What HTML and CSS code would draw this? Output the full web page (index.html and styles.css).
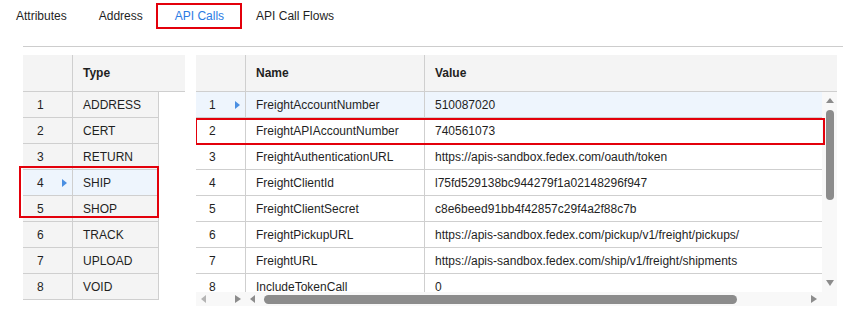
FILE: index.html
```html
<!DOCTYPE html>
<html lang="en">
<head>
    <meta charset="UTF-8">
    <meta name="viewport" content="width=device-width, initial-scale=1.0">
    <title>API Calls</title>
    <link rel="stylesheet" href="styles.css">
</head>
<body>
    <div class="tabs">
        <div class="tab">Attributes</div>
        <div class="tab">Address</div>
        <div class="tab active mark-tab">API Calls</div>
        <div class="tab">API Call Flows</div>
    </div>

    <div class="panel">
        <!-- call types -->
        <div class="type-grid">
            <div class="head">
                <div class="num"></div>
                <div class="col-type">Type</div>
            </div>
            <div class="row"><div class="num">1</div><div class="col-type">ADDRESS</div></div>
            <div class="row"><div class="num">2</div><div class="col-type">CERT</div></div>
            <div class="row"><div class="num">3</div><div class="col-type">RETURN</div></div>
            <div class="mark-group">
                <div class="row current"><div class="num">4<span class="pointer"></span></div><div class="col-type">SHIP</div></div>
                <div class="row"><div class="num">5</div><div class="col-type">SHOP</div></div>
            </div>
            <div class="row"><div class="num">6</div><div class="col-type">TRACK</div></div>
            <div class="row"><div class="num">7</div><div class="col-type">UPLOAD</div></div>
            <div class="row"><div class="num">8</div><div class="col-type">VOID</div></div>
        </div>

        <!-- settings of the selected call -->
        <div class="call-grid">
            <div class="head">
                <div class="num"></div>
                <div class="col-name">Name</div>
                <div class="col-value">Value</div>
            </div>
            <div class="body">
                <div class="rows">
                    <div class="row current"><div class="num">1<span class="pointer"></span></div><div class="col-name">FreightAccountNumber</div><div class="col-value">510087020</div></div>
                    <div class="row mark-row"><div class="num">2</div><div class="col-name">FreightAPIAccountNumber</div><div class="col-value">740561073</div></div>
                    <div class="row"><div class="num">3</div><div class="col-name">FreightAuthenticationURL</div><div class="col-value">https://apis-sandbox.fedex.com/oauth/token</div></div>
                    <div class="row"><div class="num">4</div><div class="col-name">FreightClientId</div><div class="col-value">l75fd529138bc944279f1a02148296f947</div></div>
                    <div class="row"><div class="num">5</div><div class="col-name">FreightClientSecret</div><div class="col-value">c8e6beed91bb4f42857c29f4a2f88c7b</div></div>
                    <div class="row"><div class="num">6</div><div class="col-name">FreightPickupURL</div><div class="col-value">https://apis-sandbox.fedex.com/pickup/v1/freight/pickups/</div></div>
                    <div class="row"><div class="num">7</div><div class="col-name">FreightURL</div><div class="col-value">https://apis-sandbox.fedex.com/ship/v1/freight/shipments</div></div>
                    <div class="row"><div class="num">8</div><div class="col-name">IncludeTokenCall</div><div class="col-value">0</div></div>
                </div>
                <div class="vscroll">
                    <span class="arrow up"></span>
                    <span class="vthumb"></span>
                    <span class="arrow down"></span>
                </div>
            </div>
            <div class="hscroll">
                <div class="frozen">
                    <span class="arrow left off"></span>
                    <span class="arrow right"></span>
                </div>
                <div class="track">
                    <span class="arrow left"></span>
                    <span class="hthumb"></span>
                    <span class="arrow right"></span>
                </div>
                <div class="corner"></div>
            </div>
        </div>
    </div>
</body>
</html>
```

FILE: styles.css
```css
body {
    margin: 0;
    font-family: "Liberation Sans", Arial, sans-serif;
    font-size: 12px;
    color: #1f1f1f;
    background: #fff;
}

/* tab strip */
.tabs {
    display: flex;
    padding-top: 3px;
}
.tab {
    position: relative;
    height: 26px;
    line-height: 26px;
    padding: 0 16px;
    white-space: nowrap;
}
.tab.active {
    color: #2a7be4;
}

/* red review marks drawn over the page */
.mark-tab::after,
.mark-row::after,
.mark-group::after {
    content: "";
    position: absolute;
    border: 2px solid #e3000b;
    pointer-events: none;
}
.mark-tab::after {
    top: 0;
    bottom: 0;
    left: -3px;
    right: -2px;
}
.mark-group {
    position: relative;
    width: 136px;
}
.mark-group::after {
    top: -4px;
    bottom: 4px;
    left: -4px;
    right: 0;
}
.mark-row {
    position: relative;
    z-index: 1;
}
.mark-row::after {
    top: 0;
    bottom: -2px;
    left: -1px;
    right: -3px;
}

.panel {
    display: flex;
    gap: 11px;
    margin: 17px 0 0 23px;
    padding: 8px 6px 0 0;
    border-top: 1px solid #cdcdcd;
}

/* shared grid bits */
.head {
    display: flex;
    height: 37px;
    background: #f4f4f4;
    border-bottom: 1px solid #cfcfcf;
    box-sizing: border-box;
    font-weight: bold;
}
.head > div {
    line-height: 36px;
}
.row {
    display: flex;
    height: 26px;
    border-bottom: 1px solid #cfcfcf;
    box-sizing: border-box;
    line-height: 26px;
    white-space: nowrap;
}
.row.current {
    background: #eef5fd;
}
.num {
    display: flex;
    align-items: center;
    justify-content: space-between;
    width: 50px;
    box-sizing: border-box;
    border-right: 1px solid #cfcfcf;
    padding: 0 5px 0 13px;
}
.pointer {
    width: 0;
    height: 0;
    border-left: 5px solid #4a8fe2;
    border-top: 4.5px solid transparent;
    border-bottom: 4.5px solid transparent;
}

/* left grid */
.type-grid {
    width: 162px;
    flex-shrink: 0;
}
.type-grid .row {
    width: 136px;
    background: #f4f4f4;
}
.type-grid .row.current {
    background: #eef5fd;
}
.type-grid .num {
    padding-left: 14px;
}
.col-type {
    width: 86px;
    box-sizing: border-box;
    padding-left: 10px;
}
.type-grid .row .col-type {
    border-right: 1px solid #cfcfcf;
}

/* right grid */
.call-grid {
    flex: 1;
    min-width: 0;
}
.col-name {
    width: 179px;
    box-sizing: border-box;
    padding-left: 10px;
    border-right: 1px solid #cfcfcf;
}
.col-value {
    flex: 1;
    padding-left: 10px;
    overflow: hidden;
}
.body {
    display: flex;
    height: 200px;
    overflow: hidden;
}
.rows {
    flex: 1;
    min-width: 0;
}

/* fake scrollbars */
.arrow {
    width: 0;
    height: 0;
    flex-shrink: 0;
}
.arrow.up {
    border-left: 4px solid transparent;
    border-right: 4px solid transparent;
    border-bottom: 5px solid #8c8c8c;
    margin-top: 6px;
}
.arrow.down {
    border-left: 4px solid transparent;
    border-right: 4px solid transparent;
    border-top: 6px solid #8c8c8c;
    margin-top: 80px;
}
.arrow.left {
    border-top: 4px solid transparent;
    border-bottom: 4px solid transparent;
    border-right: 5px solid #8c8c8c;
}
.arrow.right {
    border-top: 4px solid transparent;
    border-bottom: 4px solid transparent;
    border-left: 6px solid #8c8c8c;
}
.arrow.off {
    border-right-color: #b4b4b4;
}
.vscroll {
    width: 15px;
    flex-shrink: 0;
    display: flex;
    flex-direction: column;
    align-items: center;
    background: #f8f8f8;
}
.vthumb {
    width: 8px;
    height: 90px;
    margin-top: 7px;
    border-radius: 4px;
    background: #8c8c8c;
}
.hscroll {
    display: flex;
    height: 14px;
    background: #f8f8f8;
}
.frozen {
    width: 50px;
    display: flex;
    align-items: center;
    justify-content: space-between;
    box-sizing: border-box;
    padding: 0 5px;
}
.track {
    flex: 1;
    display: flex;
    align-items: center;
    padding: 0 5px 0 4px;
}
.hthumb {
    width: 473px;
    height: 9px;
    margin-left: 9px;
    margin-right: auto;
    border-radius: 4.5px;
    background: #8c8c8c;
}
.corner {
    width: 15px;
}
```
